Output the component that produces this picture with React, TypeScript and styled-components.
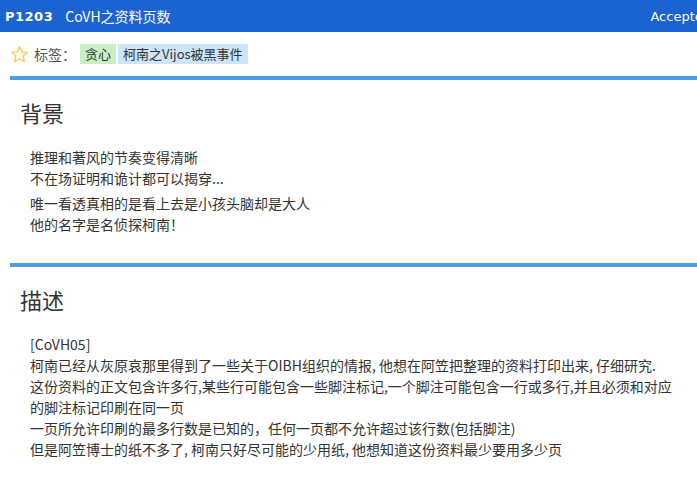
import styled, { createGlobalStyle } from 'styled-components';

const GlobalStyle = createGlobalStyle`
  html, body {
    margin: 0;
    padding: 0;
    background: #ffffff;
    overflow: hidden;
  }
  body {
    font-family: "Noto Sans CJK SC", "Noto Sans", sans-serif;
    color: #333333;
  }
`;

const background = [
  ['推理和著风的节奏变得清晰', '不在场证明和诡计都可以揭穿...'],
  ['唯一看透真相的是看上去是小孩头脑却是大人', '他的名字是名侦探柯南！'],
];

const description = [
  '[CoVH05]',
  '柯南已经从灰原哀那里得到了一些关于OIBH组织的情报, 他想在阿笠把整理的资料打印出来, 仔细研究.',
  '这份资料的正文包含许多行,某些行可能包含一些脚注标记,一个脚注可能包含一行或多行,并且必须和对应的脚注标记印刷在同一页',
  '一页所允许印刷的最多行数是已知的，任何一页都不允许超过该行数(包括脚注)',
  '但是阿笠博士的纸不多了, 柯南只好尽可能的少用纸, 他想知道这份资料最少要用多少页',
];

const StarIcon = () => (
  <svg width="19" height="19" viewBox="0 0 24 24">
    <path
      d="M12 2.2l2.95 6.3 6.85.8-5.08 4.7 1.38 6.8L12 17.4l-6.1 3.4 1.38-6.8L2.2 9.3l6.85-.8z"
      fill="#fffbea"
      stroke="#f2c64a"
      strokeWidth="1.5"
      strokeLinejoin="round"
    />
  </svg>
);

const App = () => {
  return (
    <Page>
      <GlobalStyle />
      <Header>
        <ProblemId>P1203</ProblemId>
        <ProblemTitle>CoVH之资料页数</ProblemTitle>
        <Status>Accepted</Status>
      </Header>
      <TagRow>
        <StarIcon />
        <TagLabel>标签：</TagLabel>
        <Tag $kind="algo">贪心</Tag>
        <Tag $kind="source">柯南之Vijos被黑事件</Tag>
      </TagRow>
      <Section>
        <SectionTitle>背景</SectionTitle>
        <SectionBody>
          {background.map((para, i) => (
            <Paragraph key={i}>
              {para.map((line, j) => (
                <Line key={j}>{line}</Line>
              ))}
            </Paragraph>
          ))}
        </SectionBody>
      </Section>
      <Section>
        <SectionTitle>描述</SectionTitle>
        <SectionBody>
          <Paragraph>
            {description.map((line, i) => (
              <Line key={i}>{line}</Line>
            ))}
          </Paragraph>
        </SectionBody>
      </Section>
    </Page>
  );
};

const Page = styled.div`
  width: 697px;
  min-height: 483px;
  overflow: hidden;
`;

const Header = styled.div`
  height: 32px;
  background: #1b63d1;
  color: #ffffff;
  display: flex;
  align-items: center;
  padding-left: 5px;
  overflow: hidden;
  white-space: nowrap;
`;

const ProblemId = styled.span`
  font-family: "DejaVu Sans", Verdana, sans-serif;
  font-weight: 700;
  font-size: 13px;
  letter-spacing: 0.5px;
`;

const ProblemTitle = styled.span`
  margin-left: 12px;
  font-size: 14px;
`;

const Status = styled.span`
  margin-left: auto;
  margin-right: -14px;
  font-family: "DejaVu Sans", Verdana, sans-serif;
  font-size: 13px;
  flex-shrink: 0;
`;

const TagRow = styled.div`
  display: flex;
  align-items: center;
  height: 44px;
  padding-left: 10px;
  font-size: 14px;
  color: #555555;
`;

const TagLabel = styled.span`
  margin-left: 5px;
  margin-right: 4px;
`;

const Tag = styled.span<{ $kind: 'algo' | 'source' }>`
  height: 20px;
  line-height: 20px;
  padding: 0 5px;
  margin-right: 2px;
  font-size: 13px;
  color: #333333;
  background: ${(p) => (p.$kind === 'algo' ? '#c9efc2' : '#cce5fa')};
`;

const Section = styled.section`
  margin-left: 10px;
  border-top: 4px solid #4c9ce8;
  padding-bottom: 24px;
`;

const SectionTitle = styled.h2`
  margin: 17px 10px 0;
  font-size: 22px;
  line-height: 30px;
  font-weight: 400;
  color: #333333;
`;

const SectionBody = styled.div`
  padding: 20px 20px 0;
  font-size: 14px;
  color: #333333;
`;

const Paragraph = styled.div`
  margin-bottom: 4px;
`;

const Line = styled.div`
  line-height: 21px;
`;

export default App;
